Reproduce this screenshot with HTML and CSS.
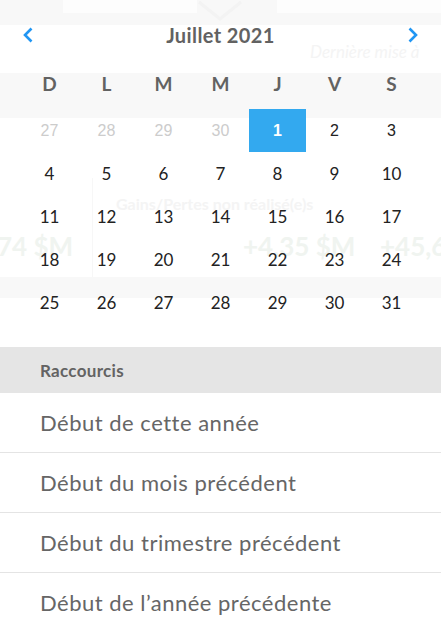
FILE: index.html
```html
<!DOCTYPE html>
<html lang="fr">
<head>
<meta charset="utf-8">
<title>Calendrier</title>
<link rel="stylesheet" href="styles.css">
</head>
<body>
<div class="ghost" aria-hidden="true">
  <div class="g-top"></div>
  <div class="g-box g-box1"></div>
  <div class="g-box g-box2"></div>
  <svg class="g-caret" width="46" height="22" viewBox="0 0 46 22"><path d="M2 2 L23 19 L44 2" fill="none" stroke="#f3f3f3" stroke-width="3"/></svg>
  <div class="g-band g-band1"></div>
  <div class="g-band g-band2"></div>
  <div class="g-vline"></div>
  <div class="g-text g-maj">Dernière mise à</div>
  <div class="g-text g-gains">Gains/Pertes non réalisé(e)s</div>
  <div class="g-text g-val g-v1">74 $M</div>
  <div class="g-text g-val g-v2">+4,35 $M</div>
  <div class="g-text g-val g-v3">+45,6</div>
</div>

<div class="popup">
  <div class="cal-head">
    <button class="nav" aria-label="Mois précédent">
      <svg width="12" height="16" viewBox="0 0 12 16"><path d="M9.5 1.5 L3 8 L9.5 14.5" fill="none" stroke="#2196f3" stroke-width="2.6"/></svg>
    </button>
    <div class="title">Juillet 2021</div>
    <button class="nav" aria-label="Mois suivant">
      <svg width="12" height="16" viewBox="0 0 12 16"><path d="M2.5 1.5 L9 8 L2.5 14.5" fill="none" stroke="#2196f3" stroke-width="2.6"/></svg>
    </button>
  </div>
  <div class="weekdays">
    <span>D</span><span>L</span><span>M</span><span>M</span><span>J</span><span>V</span><span>S</span>
  </div>
  <div class="days">
    <span class="d first other">27</span><span class="d first other">28</span><span class="d first other">29</span><span class="d first other">30</span><span class="d first sel">1</span><span class="d first">2</span><span class="d first">3</span>
    <span class="d">4</span><span class="d">5</span><span class="d">6</span><span class="d">7</span><span class="d">8</span><span class="d">9</span><span class="d">10</span>
    <span class="d">11</span><span class="d">12</span><span class="d">13</span><span class="d">14</span><span class="d">15</span><span class="d">16</span><span class="d">17</span>
    <span class="d">18</span><span class="d">19</span><span class="d">20</span><span class="d">21</span><span class="d">22</span><span class="d">23</span><span class="d">24</span>
    <span class="d">25</span><span class="d">26</span><span class="d">27</span><span class="d">28</span><span class="d">29</span><span class="d">30</span><span class="d">31</span>
  </div>
  <div class="shortcuts">
    <div class="sc-head">Raccourcis</div>
    <div class="sc-item">Début de cette année</div>
    <div class="sc-item">Début du mois précédent</div>
    <div class="sc-item">Début du trimestre précédent</div>
    <div class="sc-item">Début de l’année précédente</div>
  </div>
</div>
</body>
</html>
```

FILE: styles.css
```css
* { box-sizing: border-box; }
html, body { margin: 0; padding: 0; }
body {
  width: 441px;
  height: 632px;
  overflow: hidden;
  position: relative;
  background: #ffffff;
  font-family: Lato, "Open Sans", sans-serif;
}

/* faint page content behind the popup */
.ghost { position: absolute; inset: 0; z-index: 0; }
.g-top { position: absolute; left: 0; top: 0; width: 441px; height: 25px; background: #f8f8f8; }
.g-box { position: absolute; top: 0; height: 13px; background: #fdfdfd; }
.g-box1 { left: 63px; width: 134px; }
.g-box2 { left: 277px; width: 164px; }
.g-caret { position: absolute; left: 197px; top: 0; }
.g-band { position: absolute; left: 0; width: 441px; background: #f8f8f8; }
.g-band1 { top: 73px; height: 45px; }
.g-band2 { top: 277px; height: 21px; }
.g-vline { position: absolute; left: 92px; top: 178px; width: 1px; height: 99px; background: #f7f7f7; }
.g-text { position: absolute; white-space: nowrap; }
.g-maj { left: 310px; top: 41px; font-size: 17px; font-style: italic; color: #f4f4f4; }
.g-gains { left: 116px; top: 194px; font-size: 16px; font-weight: 700; color: #f4f4f4; }
.g-val { top: 230px; font-size: 26px; font-weight: 700; color: #f0f4f0; }
.g-v1 { left: -3px; }
.g-v2 { left: 243px; }
.g-v3 { left: 380px; }

/* popup */
.popup { position: relative; z-index: 1; }
.cal-head {
  height: 62px;
  display: flex;
  align-items: flex-start;
  justify-content: space-between;
  padding: 24px 20px 0 20px;
}
.nav {
  border: 0;
  background: none;
  padding: 0;
  width: 16px;
  height: 22px;
  display: flex;
  align-items: center;
  justify-content: center;
  cursor: pointer;
}
.title {
  font-size: 20px;
  font-weight: 700;
  letter-spacing: 0.4px;
  line-height: 22px;
  color: #626262;
}
.weekdays {
  display: grid;
  grid-template-columns: repeat(7, 57px);
  padding: 0 21px;
  height: 47px;
  align-items: start;
}
.weekdays span {
  text-align: center;
  font-size: 19px;
  font-weight: 700;
  line-height: 43px;
  color: #626262;
}
.days {
  display: grid;
  grid-template-columns: repeat(7, 57px);
  grid-auto-rows: 43px;
  padding: 0 21px;
}
.d {
  display: flex;
  align-items: center;
  justify-content: center;
  font-size: 17px;
  color: #222222;
}
.d.first { font-family: "Liberation Sans", Arial, sans-serif; font-size: 16px; }
.d.other { color: #cccccc; }
.d.sel { background: #33a9ef; color: #ffffff; font-weight: 700; }

.shortcuts { margin-top: 23px; }
.sc-head {
  height: 46px;
  background: #e5e5e5;
  padding-left: 40px;
  display: flex;
  align-items: center;
  font-size: 17px;
  font-weight: 700;
  letter-spacing: 0.3px;
  color: #636363;
}
.sc-item {
  height: 60px;
  padding-left: 40px;
  display: flex;
  align-items: center;
  font-size: 22px;
  letter-spacing: 0.5px;
  color: #666666;
  border-bottom: 1px solid #e4e4e4;
  background: rgba(255,255,255,0.96);
}
```
